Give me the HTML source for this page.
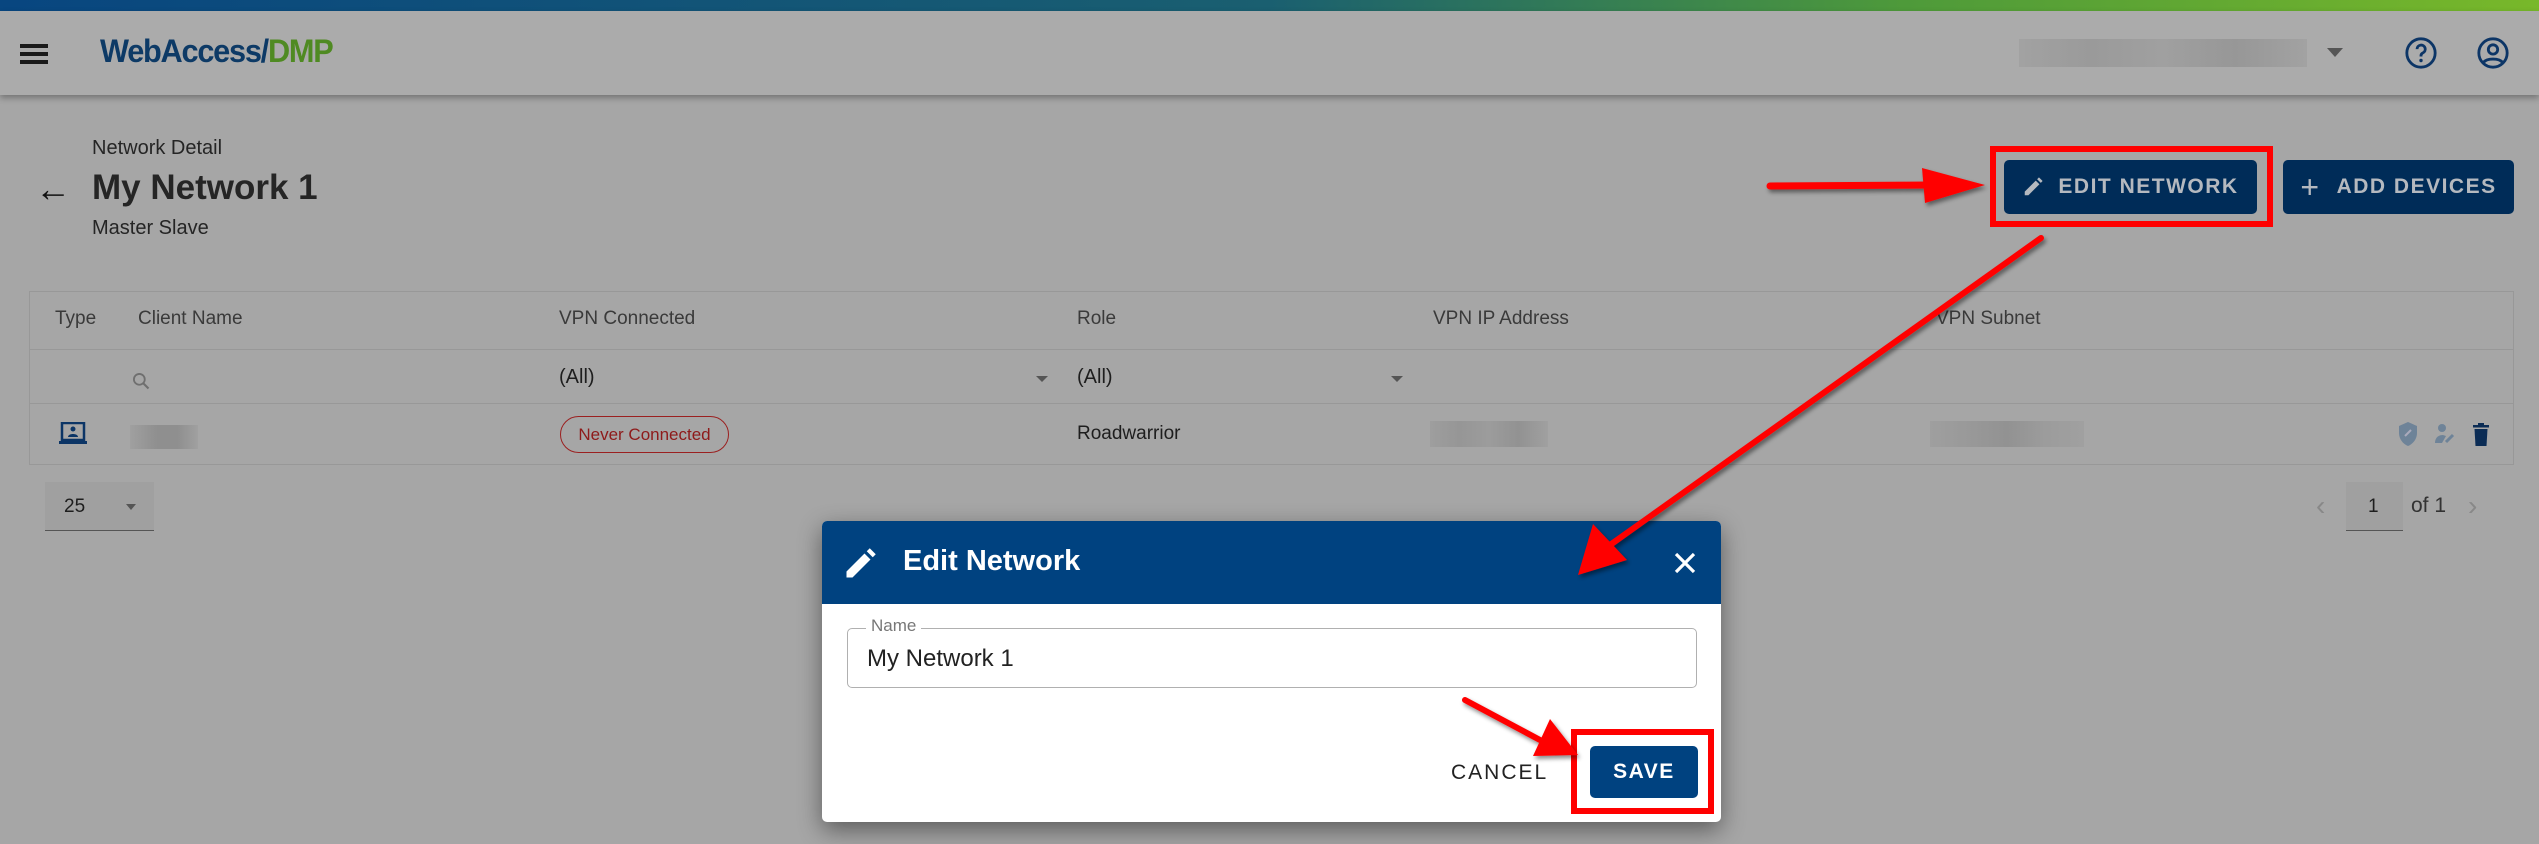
<!DOCTYPE html>
<html><head><meta charset="utf-8">
<style>
*{margin:0;padding:0;box-sizing:border-box}
body{width:2539px;height:844px;overflow:hidden;background:#a6a6a6;font-family:"Liberation Sans",sans-serif;position:relative;color:#222}
.a{position:absolute;white-space:nowrap}
.topbar{left:0;top:0;width:2539px;height:11px;background:linear-gradient(90deg,#084680,#1a5f70 50%,#4e9a3a 75%,#78b82a)}
.header{left:0;top:11px;width:2539px;height:84px;background:#ababab;box-shadow:0 3px 6px rgba(0,0,0,.3)}
.btn{background:#002c58;color:#b5b9bf;border-radius:5px;font-size:21px;letter-spacing:1.5px;font-weight:bold;display:flex;align-items:center;justify-content:center}
.th{font-size:19px;color:#3a3a3a;top:308px}
.blur{background:#999}
</style></head><body>
<div class="a topbar"></div>
<div class="a header"></div>
<div class="a" style="left:20px;top:44px;width:28px;height:4px;background:#1a1a1a;box-shadow:0 8px 0 #1a1a1a,0 16px 0 #1a1a1a"></div>
<div class="a" style="left:100px;top:33px;font-size:32px;font-weight:bold;letter-spacing:-1.3px;color:#0d3a66;transform:scaleX(.96);transform-origin:left">WebAccess/<span style="color:#4f8a22">DMP</span></div>
<div class="a blur" style="left:2019px;top:39px;width:288px;height:28px;background:linear-gradient(90deg,#a2a2a2,#9a9a9a,#a0a0a0,#979797,#a2a2a2)"></div>
<div class="a" style="left:2327px;top:48px;width:0;height:0;border-left:8px solid transparent;border-right:8px solid transparent;border-top:9px solid #555"></div>
<svg class="a" style="left:2404px;top:36px" width="34" height="34" viewBox="0 0 24 24"><circle cx="12" cy="12" r="10" fill="none" stroke="#0c3566" stroke-width="2"/><path d="M9.2 9.3a2.9 2.9 0 1 1 4 2.7c-.8.4-1.2 1-1.2 1.9v.6" fill="none" stroke="#0c3566" stroke-width="2"/><circle cx="12" cy="17.3" r="1.2" fill="#0c3566"/></svg>
<svg class="a" style="left:2476px;top:36px" width="34" height="34" viewBox="0 0 24 24"><circle cx="12" cy="12" r="10" fill="none" stroke="#0c3566" stroke-width="2"/><circle cx="12" cy="9.5" r="3.3" fill="none" stroke="#0c3566" stroke-width="2"/><path d="M5.5 18.5c2-3 11-3 13 0" fill="none" stroke="#0c3566" stroke-width="2"/></svg>

<div class="a" style="left:35px;top:168px;font-size:36px;color:#111">&#8592;</div>
<div class="a" style="left:92px;top:137px;font-size:20px;color:#252525">Network Detail</div>
<div class="a" style="left:92px;top:168px;font-size:35px;font-weight:bold;color:#252525">My Network 1</div>
<div class="a" style="left:92px;top:217px;font-size:20px;color:#252525">Master Slave</div>

<div class="a btn" style="left:2004px;top:160px;width:253px;height:54px"><svg width="22" height="26" viewBox="0 0 24 24" style="margin-right:14px"><path d="M3 21v-4L15 5l4 4L7 21zM16.5 3.5l2-2 4 4-2 2z" fill="#b5b9bf"/></svg>EDIT NETWORK</div>
<div class="a" style="left:1990px;top:146px;width:283px;height:81px;border:6px solid #f00"></div>
<div class="a btn" style="left:2283px;top:160px;width:231px;height:54px"><span style="font-size:32px;font-weight:normal;margin-right:16px">+</span>ADD DEVICES</div>

<div class="a" style="left:29px;top:291px;width:2485px;height:174px;border:1px solid #989898"></div>
<div class="a" style="left:29px;top:349px;width:2485px;height:1px;background:#989898"></div>
<div class="a" style="left:29px;top:403px;width:2485px;height:1px;background:#989898"></div>
<div class="a th" style="left:55px">Type</div>
<div class="a th" style="left:138px">Client Name</div>
<div class="a th" style="left:559px">VPN Connected</div>
<div class="a th" style="left:1077px">Role</div>
<div class="a th" style="left:1433px">VPN IP Address</div>
<div class="a th" style="left:1936px">VPN Subnet</div>
<svg class="a" style="left:131px;top:371px" width="20" height="20" viewBox="0 0 24 24"><circle cx="10" cy="10" r="6.5" fill="none" stroke="#6f6f6f" stroke-width="2.2"/><path d="M15 15l6 6" stroke="#6f6f6f" stroke-width="2.5"/></svg>
<div class="a" style="left:559px;top:366px;font-size:20px;color:#1e1e1e">(All)</div>
<div class="a" style="left:1036px;top:376px;border-left:6px solid transparent;border-right:6px solid transparent;border-top:6px solid #555"></div>
<div class="a" style="left:1077px;top:366px;font-size:20px;color:#1e1e1e">(All)</div>
<div class="a" style="left:1391px;top:376px;border-left:6px solid transparent;border-right:6px solid transparent;border-top:6px solid #555"></div>
<svg class="a" style="left:59px;top:422px" width="28" height="24" viewBox="0 0 28 24"><rect x="3" y="1" width="22" height="17" fill="none" stroke="#0c3566" stroke-width="2.5"/><circle cx="14" cy="7" r="2.5" fill="#0c3566"/><path d="M9 15c0-4 10-4 10 0z" fill="#0c3566"/><rect x="0" y="19" width="28" height="3" fill="#0c3566"/></svg>
<div class="a" style="left:130px;top:425px;width:68px;height:24px;background:linear-gradient(90deg,#a0a0a0,#8f8f8f 40%,#8f8f8f 70%,#a0a0a0)"></div>
<div class="a" style="left:560px;top:416px;width:169px;height:37px;border:1.5px solid #9b2020;border-radius:19px;color:#8e1a1a;font-size:17px;display:flex;align-items:center;justify-content:center">Never Connected</div>
<div class="a" style="left:1077px;top:423px;font-size:19px;color:#1e1e1e">Roadwarrior</div>
<div class="a" style="left:1430px;top:421px;width:118px;height:26px;background:linear-gradient(90deg,#9e9e9e,#969696,#9c9c9c,#929292,#a0a0a0)"></div>
<div class="a" style="left:1930px;top:421px;width:154px;height:26px;background:linear-gradient(90deg,#9f9f9f,#999,#929292,#9c9c9c,#a0a0a0)"></div>
<svg class="a" style="left:2397px;top:421px" width="22" height="26" viewBox="0 0 22 26"><path d="M11 1l9 4v7c0 6-4 11-9 13-5-2-9-7-9-13V5z" fill="#6e8398"/><path d="M8 15l6-6" stroke="#aab" stroke-width="2"/></svg>
<svg class="a" style="left:2434px;top:423px" width="22" height="22" viewBox="0 0 22 22"><circle cx="8" cy="5" r="4" fill="#6e8398"/><path d="M1 20c0-6 4-8 8-8l3 1-4 7z" fill="#6e8398"/><path d="M12 19l7-7" stroke="#6e8398" stroke-width="3"/></svg>
<svg class="a" style="left:2472px;top:423px" width="18" height="24" viewBox="0 0 18 24"><rect x="1" y="2" width="16" height="2.5" fill="#0b2c55"/><rect x="6" y="0" width="6" height="3" fill="#0b2c55"/><path d="M2.5 6h13l-1 17h-11z" fill="#0b2c55"/></svg>

<div class="a" style="left:45px;top:482px;width:109px;height:49px;background:#a0a0a0;border-bottom:1.5px solid #555"></div>
<div class="a" style="left:64px;top:496px;font-size:19px;color:#1e1e1e">25</div>
<div class="a" style="left:126px;top:504px;border-left:5px solid transparent;border-right:5px solid transparent;border-top:6px solid #555"></div>
<div class="a" style="left:2316px;top:490px;font-size:28px;color:#888">&#8249;</div>
<div class="a" style="left:2346px;top:482px;width:57px;height:49px;background:#a0a0a0;border-bottom:1.5px solid #555"></div>
<div class="a" style="left:2368px;top:496px;font-size:19px;color:#1e1e1e">1</div>
<div class="a" style="left:2411px;top:494px;font-size:21px;color:#333">of 1</div>
<div class="a" style="left:2468px;top:490px;font-size:28px;color:#888">&#8250;</div>

<div class="a" style="left:822px;top:521px;width:899px;height:301px;background:#fff;border-radius:5px;box-shadow:0 8px 24px rgba(0,0,0,.45);overflow:hidden">
  <div style="height:83px;background:#004280;position:relative">
    <svg style="position:absolute;left:20px;top:25px" width="36" height="36" viewBox="0 0 24 24"><path d="M3 21v-4L15 5l4 4L7 21zM16.5 3.5l2-2 4 4-2 2z" fill="#fff"/></svg>
    <div style="position:absolute;left:81px;top:24px;font-size:29px;font-weight:bold;color:#fff">Edit Network</div>
    <svg style="position:absolute;left:851px;top:30px" width="24" height="24" viewBox="0 0 24 24"><path d="M3 3l18 18M21 3L3 21" stroke="#fff" stroke-width="3.2"/></svg>
  </div>
  <div style="position:absolute;left:25px;top:107px;width:850px;height:60px;border:1.5px solid #b0b0b0;border-radius:5px"></div>
  <div style="position:absolute;left:44px;top:95px;background:#fff;padding:0 5px;font-size:17px;color:#777">Name</div>
  <div style="position:absolute;left:45px;top:124px;font-size:24px;color:#222">My Network 1</div>
  <div style="position:absolute;left:629px;top:240px;font-size:21px;letter-spacing:2px;color:#222">CANCEL</div>
  <div style="position:absolute;left:768px;top:225px;width:108px;height:52px;background:#004280;border-radius:5px;color:#fff;font-size:21px;font-weight:bold;letter-spacing:1.5px;display:flex;align-items:center;justify-content:center">SAVE</div>
</div>
<div class="a" style="left:1571px;top:729px;width:143px;height:85px;border:6px solid #f00"></div>

<svg class="a" style="left:0;top:0" width="2539" height="844">
<defs><filter id="s"><feDropShadow dx="2" dy="3" stdDeviation="2" flood-opacity=".45"/></filter></defs>
<g filter="url(#s)" fill="#f00" stroke="#f00">
<line x1="1770" y1="186" x2="1930" y2="185" stroke-width="7" stroke-linecap="round"/>
<polygon points="1985,185 1922,168 1925,203" stroke="none"/>
<line x1="2041" y1="238" x2="1610" y2="545" stroke-width="6" stroke-linecap="round"/>
<polygon points="1578,575 1593,524 1627,560" stroke="none"/>
<line x1="1465" y1="700" x2="1540" y2="740" stroke-width="6" stroke-linecap="round"/>
<polygon points="1578,755 1550,719 1533,756" stroke="none"/>
</g>
</svg>
</body></html>
